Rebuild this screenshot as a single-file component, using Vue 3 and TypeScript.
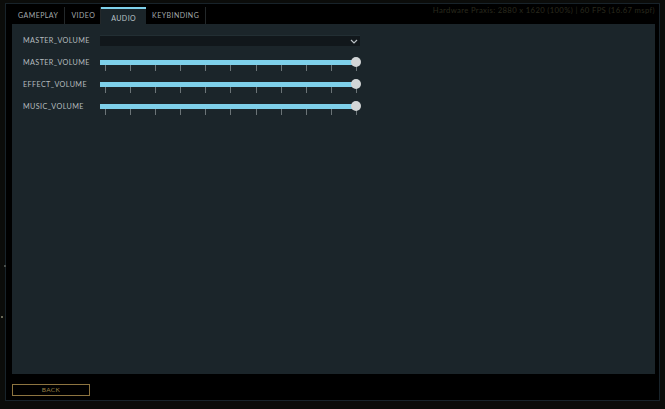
<script setup lang="ts">
import { ref } from 'vue'

interface SliderRow {
  label: string
  value: number
}

const tabs = ['GAMEPLAY', 'VIDEO', 'AUDIO', 'KEYBINDING']
const activeTab = ref('AUDIO')

const sliders: SliderRow[] = [
  { label: 'MASTER_VOLUME', value: 100 },
  { label: 'EFFECT_VOLUME', value: 100 },
  { label: 'MUSIC_VOLUME', value: 100 },
]

// 11 ticks under each track
const ticks = Array.from({ length: 11 }, (_, i) => i)
</script>

<template>
  <div class="screen">
    <span class="speck speck-a"></span>
    <span class="speck speck-b"></span>
    <div class="window">
      <div class="top">
        <nav class="tabs">
          <div
            v-for="tab in tabs"
            :key="tab"
            class="tab"
            :class="{ active: tab === activeTab }"
          >
            {{ tab }}
          </div>
        </nav>
        <div class="stats">Hardware Praxis: 2880 x 1620 (100%) | 60 FPS (16.67 mspf)</div>
      </div>

      <section class="panel">
        <div class="row">
          <label class="label">MASTER_VOLUME</label>
          <div class="select">
            <svg class="chevron" width="8" height="5" viewBox="0 0 8 5">
              <path d="M1 1l3 3 3-3" fill="none" stroke="#b9c0c4" stroke-width="1.2" />
            </svg>
          </div>
        </div>
        <div v-for="(s, i) in sliders" :key="i" class="row">
          <label class="label">{{ s.label }}</label>
          <div class="slider">
            <div class="track" :style="{ width: s.value + '%' }"></div>
            <div class="thumb"></div>
            <div class="ticks">
              <span v-for="t in ticks" :key="t" class="tick"></span>
            </div>
          </div>
        </div>
      </section>

      <footer class="bottom">
        <button class="back">BACK</button>
      </footer>
    </div>
  </div>
</template>

<style scoped>
.screen {
  position: relative;
  width: 665px;
  height: 409px;
  box-sizing: border-box;
  padding: 3px 5px 8px 5px;
  background: #0b0c0a;
  font-family: "Lato", "Liberation Sans", sans-serif;
  overflow: hidden;
}

.speck {
  position: absolute;
  width: 2px;
  height: 2px;
  background: #4a4f4c;
}

.speck-a {
  left: 4px;
  top: 265px;
}

.speck-b {
  left: 1px;
  top: 316px;
  background: #6b6a58;
}

.window {
  height: 100%;
  box-sizing: border-box;
  padding: 3px 4px 0 6px;
  display: flex;
  flex-direction: column;
  background: #000;
  border: 1px solid #18232a;
}

.top {
  height: 17px;
  display: flex;
  justify-content: space-between;
  flex-shrink: 0;
}

.tabs {
  display: flex;
}

.tab {
  height: 17px;
  box-sizing: border-box;
  padding: 0 6px 1px;
  display: flex;
  align-items: center;
  font-size: 7px;
  letter-spacing: 0.45px;
  color: #a4abad;
  border-right: 1px solid #23282a;
}

.tab:nth-child(2) {
  padding: 0 5px 1px 6px;
}

.tab.active {
  padding: 2px 10px 0;
  color: #b9c3c7;
  background: #1b252a;
  border-top: 2px solid #7ed0ea;
  border-right: none;
}

.stats {
  font-size: 7.7px;
  letter-spacing: 0.35px;
  line-height: 6px;
  color: #2a2a1e;
  white-space: nowrap;
}

.panel {
  flex: 1;
  padding: 11px;
  background: #1b252a;
  display: flex;
  flex-direction: column;
  gap: 5px;
}

.row {
  height: 17px;
  display: flex;
  align-items: flex-start;
}

.label {
  width: 77px;
  flex-shrink: 0;
  font-size: 7.2px;
  letter-spacing: 0.4px;
  line-height: 12px;
  color: #b5bcbf;
}

.select {
  width: 260px;
  height: 11px;
  box-sizing: border-box;
  padding-right: 2px;
  display: flex;
  align-items: center;
  justify-content: flex-end;
  background: #11171b;
  border-top: 1px solid #222e33;
}

.slider {
  position: relative;
  width: 257px;
  height: 17px;
  padding-top: 3px;
  box-sizing: border-box;
}

.track {
  height: 5px;
  background: #7ed0ea;
}

.thumb {
  position: absolute;
  right: -4px;
  top: 0;
  width: 10px;
  height: 10px;
  border-radius: 50%;
  background: #d3d6d7;
}

.ticks {
  display: flex;
  justify-content: space-between;
  padding: 0 0 0 5px;
}

.tick {
  width: 1px;
  height: 6px;
  background: #6b7477;
}

.bottom {
  height: 26px;
  box-sizing: border-box;
  padding-top: 10px;
  flex-shrink: 0;
}

.back {
  display: block;
  width: 78px;
  height: 12px;
  padding: 0;
  box-sizing: border-box;
  font-family: inherit;
  font-size: 6.5px;
  letter-spacing: 0.4px;
  line-height: 10px;
  color: #9a8048;
  background: #000;
  border: 1px solid #8d7440;
}
</style>
